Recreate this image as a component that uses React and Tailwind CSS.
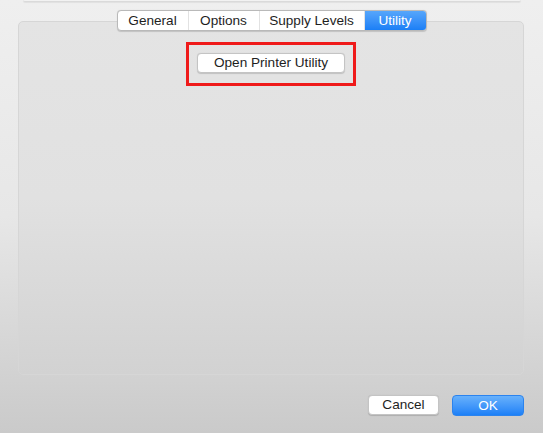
export default function App() {
  const tabs = ['General', 'Options', 'Supply Levels', 'Utility']
  const widths = ['w-[71px]', 'w-[71px]', 'w-[105px]', 'w-[61px]']

  return (
    <div className="relative h-[433px] w-[543px] overflow-hidden bg-gradient-to-b from-[#efefef] via-[#e7e7e7] to-[#cacaca] font-['Liberation_Sans',Arial,sans-serif] text-[13.6px] text-[#1e1e1e]">
      <div className="ml-[23px] h-[2px] w-[498px] rounded-b-[3px] border-b border-[#dadada] bg-[#f2f2f2] shadow-[0_1px_1px_rgba(0,0,0,0.06)]" />

      <div className="relative z-10 mt-[8px] flex justify-center">
        <div className="flex h-[21px] overflow-hidden rounded-[4px] border border-[#b9b9b9] bg-white shadow-[0_0.5px_1px_rgba(0,0,0,0.15)]">
          {tabs.map((t, i) => (
            <div
              key={t}
              className={
                i === 3
                  ? `${widths[i]} flex items-center justify-center bg-gradient-to-b from-[#56a6fb] to-[#1a7ff6] leading-none text-white`
                  : `${widths[i]} flex items-center justify-center border-r border-[#e2e2e2] leading-none`
              }
            >
              {t}
            </div>
          ))}
        </div>
      </div>

      <div className="-mt-[10px] ml-[18px] flex h-[354px] w-[506px] flex-col items-center rounded-[5px] border border-[#d6d6d6] bg-gradient-to-b from-[#e4e4e4] via-[#e1e1e1] to-[#d2d2d2] pt-[20px]">
        <div className="flex w-[170px] justify-center border-[3px] border-[#ef1a1a] pb-[10px] pt-[8px]">
          <button className="flex h-[20px] w-[148px] items-center justify-center rounded-[4px] border border-[#c4c4c4] bg-white leading-none shadow-[0_0.5px_1px_rgba(0,0,0,0.15)]">
            Open Printer Utility
          </button>
        </div>
      </div>

      <div className="mr-[19px] mt-[20px] flex justify-end gap-[13px]">
        <button className="flex h-[20px] w-[71px] items-center justify-center rounded-[4px] border border-[#c4c4c4] bg-white leading-none shadow-[0_0.5px_1px_rgba(0,0,0,0.15)]">
          Cancel
        </button>
        <button className="flex h-[21px] w-[72px] items-center justify-center rounded-[4px] border border-[#2b83ee] bg-gradient-to-b from-[#67b1fb] to-[#1b80f7] leading-none text-white">
          OK
        </button>
      </div>
    </div>
  )
}
